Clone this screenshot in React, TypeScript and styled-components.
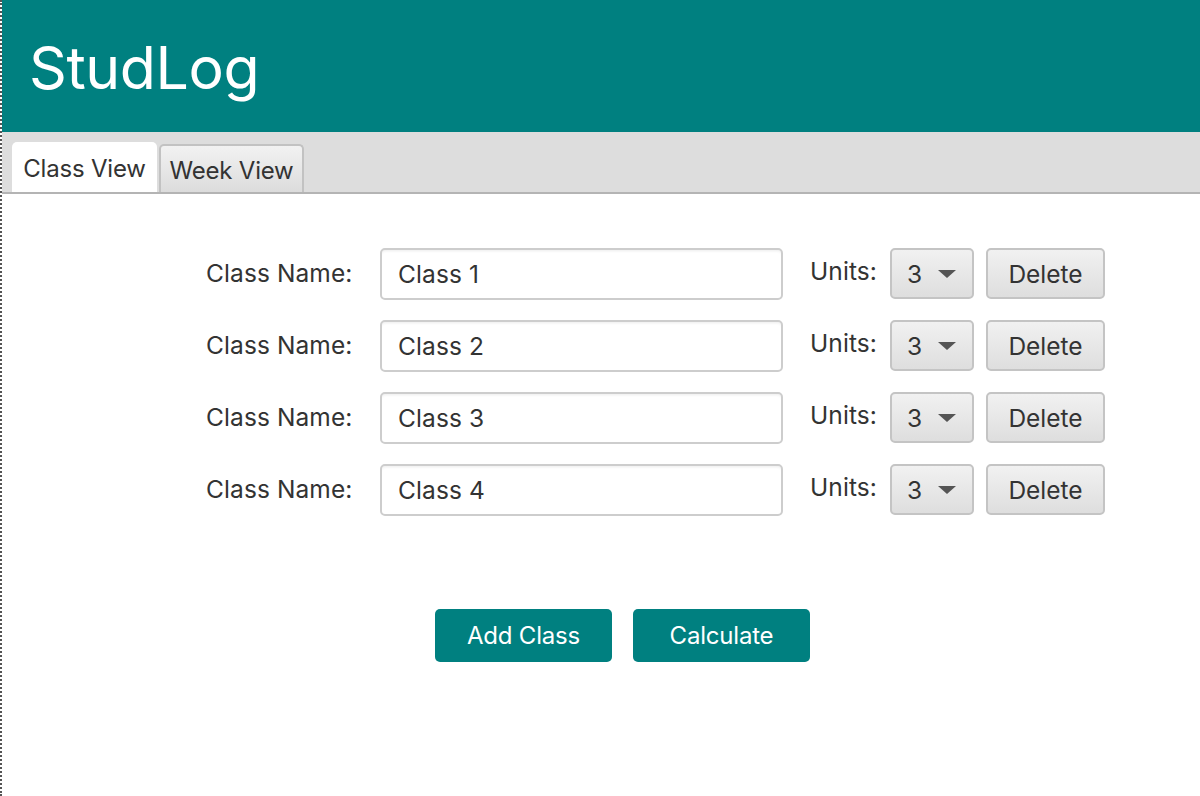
import React from "react";
import styled, { createGlobalStyle } from "styled-components";

const Global = createGlobalStyle`
  html, body {
    margin: 0;
    padding: 0;
    background: #ffffff;
    font-family: Inter, "Noto Sans", "Liberation Sans", sans-serif;
  }
`;

const Page = styled.div`
  height: 796px;
  border-left: 2px dotted #555;
  background: #fff;
  display: flex;
  flex-direction: column;
  overflow: hidden;
`;

const Header = styled.header`
  height: 132px;
  background: #008080;
  display: flex;
  align-items: center;
  padding-left: 27px;
  box-sizing: border-box;
`;

const Title = styled.h1`
  margin: 0;
  color: #fff;
  font-size: 59px;
  font-weight: 400;
  letter-spacing: -0.4px;
  padding-top: 3px;
`;

const TabBar = styled.nav`
  height: 62px;
  background: #dddddd;
  border-bottom: 2px solid #b4b4b4;
  box-sizing: border-box;
  display: flex;
  align-items: flex-end;
  gap: 2px;
  padding-left: 10px;
`;

const Tab = styled.div<{ $active?: boolean }>`
  width: 145px;
  height: ${(p) => (p.$active ? "50px" : "48px")};
  box-sizing: border-box;
  border-radius: 5px 5px 0 0;
  display: flex;
  align-items: center;
  justify-content: center;
  font-size: 24px;
  color: #333;
  letter-spacing: -0.2px;
  background: ${(p) =>
    p.$active ? "#ffffff" : "linear-gradient(#f2f2f2, #dcdcdc)"};
  border: ${(p) => (p.$active ? "none" : "2px solid #c2c2c2")};
  border-bottom: none;
  padding-top: 2px;
`;

const Content = styled.main`
  flex: 1;
  padding-top: 54px;
  padding-left: 204px;
  display: flex;
  flex-direction: column;
`;

const Rows = styled.div`
  display: flex;
  flex-direction: column;
  gap: 20px;
`;

const Row = styled.div`
  display: flex;
  align-items: flex-start;
  height: 52px;
  & > * {
    flex-shrink: 0;
  }
`;

const Label = styled.span<{ $w: number; $top?: number; $indent?: number }>`
  width: ${(p) => p.$w}px;
  box-sizing: border-box;
  padding-left: ${(p) => p.$indent ?? 0}px;
  font-size: 24.5px;
  color: #333;
  line-height: 52px;
  letter-spacing: 0.1px;
  margin-top: ${(p) => p.$top ?? -1}px;
  white-space: nowrap;
`;

const Field = styled.div`
  width: 403px;
  height: 52px;
  box-sizing: border-box;
  border: 2px solid #cdcdcd;
  border-radius: 5px;
  box-shadow: inset 0 3px 3px -2px rgba(0, 0, 0, 0.08);
  padding-left: 16px;
  display: flex;
  align-items: center;
  font-size: 24.5px;
  color: #333;
  letter-spacing: 0.1px;
`;

const Combo = styled.div`
  width: 84px;
  height: 51px;
  box-sizing: border-box;
  border: 2px solid #c4c4c4;
  border-radius: 5px;
  background: linear-gradient(#f1f1f1, #dedede);
  display: flex;
  align-items: center;
  padding-left: 15px;
  gap: 16px;
  font-size: 24.5px;
  color: #333;
  margin-right: 12px;
`;

const Arrow = styled.span`
  width: 0;
  height: 0;
  border-left: 9px solid transparent;
  border-right: 9px solid transparent;
  border-top: 8px solid #555;
`;

const Button = styled.button`
  width: 119px;
  height: 51px;
  box-sizing: border-box;
  border: 2px solid #c4c4c4;
  border-radius: 5px;
  background: linear-gradient(#f1f1f1, #dedede);
  font-family: inherit;
  font-size: 24.5px;
  color: #333;
  letter-spacing: 0;
  padding: 0;
`;

const Actions = styled.div`
  display: flex;
  gap: 21px;
  margin-top: 93px;
  margin-left: 229px;
`;

const Primary = styled.button`
  width: 177px;
  height: 53px;
  border: none;
  border-radius: 5px;
  background: #008080;
  color: #fff;
  font-family: inherit;
  font-size: 24px;
  letter-spacing: -0.2px;
  padding: 0;
`;

const classes = ["Class 1", "Class 2", "Class 3", "Class 4"];

export default function App() {
  return (
    <>
      <Global />
      <Page>
        <Header>
          <Title>StudLog</Title>
        </Header>
        <TabBar>
          <Tab $active>Class View</Tab>
          <Tab>Week View</Tab>
        </TabBar>
        <Content>
          <Rows>
            {classes.map((c) => (
              <Row key={c}>
                <Label $w={174}>Class Name:</Label>
                <Field>{c}</Field>
                <Label $w={107} $top={-3} $indent={27}>
                  Units:
                </Label>
                <Combo>
                  3 <Arrow />
                </Combo>
                <Button>Delete</Button>
              </Row>
            ))}
          </Rows>
          <Actions>
            <Primary>Add Class</Primary>
            <Primary>Calculate</Primary>
          </Actions>
        </Content>
      </Page>
    </>
  );
}
